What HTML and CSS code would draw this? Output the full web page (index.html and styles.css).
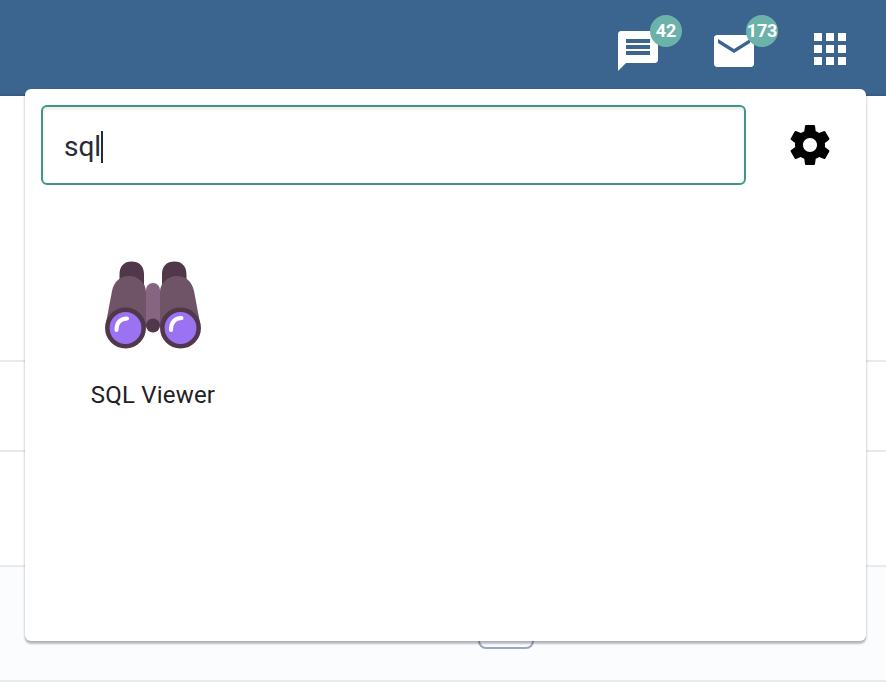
FILE: index.html
```html
<!DOCTYPE html>
<html lang="en">
<head>
<meta charset="utf-8">
<title>App launcher</title>
<link rel="stylesheet" href="styles.css">
</head>
<body>
<header class="topbar">
  <div class="action">
    <svg class="icon" viewBox="0 0 24 24"><path fill-rule="evenodd" d="M20.500 2h-17C2.670 2 2 2.670 2 3.500V22l4-4h14.500c.83 0 1.500-.67 1.500-1.500v-13C22 2.670 21.330 2 20.500 2zM6 6h12v2H6zM6 9h12v2H6zM6 12h12v2H6z"/></svg>
    <span class="badge">42</span>
  </div>
  <div class="action">
    <svg class="icon" viewBox="0 0 24 24"><path fill-rule="evenodd" d="M20.500 4h-17C2.670 4 2 4.670 2 5.500v13c0 .83.67 1.500 1.500 1.500h17c.83 0 1.500-.67 1.500-1.500v-13C22 4.670 21.330 4 20.500 4zM20 8l-8 5-8-5V6l8 5 8-5z"/></svg>
    <span class="badge badge-wide">173</span>
  </div>
  <div class="action action-apps">
    <svg class="icon" viewBox="0 0 24 24"><path d="M4 8h4V4H4zm6 12h4v-4h-4zm-6 0h4v-4H4zm0-6h4v-4H4zm6 0h4v-4h-4zm6-10v4h4V4zm-6 4h4V4h-4zm6 6h4v-4h-4zm0 6h4v-4h-4z"/></svg>
  </div>
</header>
<main class="rows">
  <div class="row row-first"></div>
  <div class="row row-second"></div>
  <div class="row row-third"></div>
  <div class="row row-tinted"><span class="control"></span></div>
</main>
<section class="launcher">
  <div class="search-line">
    <div class="search"><span>sql</span><i class="caret"></i></div>
    <svg class="icon settings" viewBox="0 0 24 24"><path d="M19.430 12.980c.04-.32.07-.64.07-.98s-.03-.66-.07-.98l2.110-1.650c.19-.15.24-.42.12-.64l-2-3.460c-.12-.22-.39-.3-.61-.22l-2.490 1c-.52-.4-1.080-.73-1.690-.98l-.38-2.650C14.460 2.180 14.250 2 14 2h-4c-.25 0-.46.18-.49.42l-.38 2.650c-.61.25-1.170.59-1.690.98l-2.490-1c-.23-.09-.49 0-.61.22l-2 3.460c-.13.22-.07.49.12.64l2.110 1.650c-.04.32-.07.65-.07.98s.03.66.07.98l-2.110 1.650c-.19.15-.24.42-.12.64l2 3.460c.12.22.39.3.61.22l2.490-1c.52.4 1.080.73 1.690.98l.38 2.650c.03.24.24.42.49.42h4c.25 0 .46-.18.49-.42l.38-2.650c.61-.25 1.170-.59 1.690-.98l2.490 1c.23.09.49 0 .61-.22l2-3.460c.12-.22.07-.49-.12-.64zM12 15.500c-1.930 0-3.500-1.570-3.500-3.500s1.570-3.500 3.500-3.500 3.500 1.570 3.500 3.500-1.570 3.500-3.500 3.500z"/></svg>
  </div>
  <div class="tile">
    <svg class="tile-icon" viewBox="0 0 96 88">
      <path fill="#50374a" d="M14.500 28V14C14.500 5 19 .5 26.500 .5S39 5 39 13V28zM57 28V13C57 5 62 .5 69.500 .5S81.500 5 81.500 14V28z"/>
      <rect x="41" y="22" width="14" height="48" rx="7" fill="#866580"/>
      <path fill="#6f5366" d="M1 62L7 30C9 20 16 15 24 15S41 21 41 31V66zM95 62L89 30C87 20 80 15 72 15S55 21 55 31V66z"/>
      <circle cx="48" cy="64.500" r="7" fill="#50374a"/>
      <g fill="#9b73f2" stroke="#50374a" stroke-width="4.500"><circle cx="20.500" cy="67" r="18.200"/><circle cx="75.500" cy="67" r="18.200"/></g>
      <g fill="none" stroke="#fff" stroke-width="4" stroke-linecap="round"><path d="M11.500 69Q11.500 58 22 57.500M66 69Q66 57.500 76.500 57"/></g>
    </svg>
    <span class="tile-label">SQL Viewer</span>
  </div>
</section>
</body>
</html>
```
FILE: styles.css
```css
* { box-sizing: border-box; }
body {
  margin: 0;
  width: 886px;
  height: 684px;
  overflow: hidden;
  position: relative;
  background: #fff;
  font-family: Roboto, sans-serif;
}
.topbar {
  height: 96px;
  padding: 27px 32px 0 0;
  display: flex;
  justify-content: flex-end;
  gap: 48px;
  background: #3b658f;
  box-shadow: inset 0 -2px 0 #375b81;
}
.action { position: relative; width: 48px; height: 48px; }
.action-apps { margin-top: -2px; }
.icon { display: block; width: 48px; height: 48px; fill: #fff; }
.badge {
  position: absolute;
  top: -12px;
  left: 36px;
  width: 32px;
  height: 32px;
  border-radius: 50%;
  background: #6bb2aa;
  color: #fff;
  font-size: 18px;
  font-weight: 700;
  line-height: 32px;
  display: flex;
  justify-content: center;
}
.badge-wide { letter-spacing: -.2px; }
.row { border-bottom: 2px solid #e8eaef; }
.row-first { height: 266px; }
.row-second { height: 90px; }
.row-third { height: 115px; }
.row-tinted {
  height: 115px;
  padding: 26px 0 0 478px;
  background: #fbfcfe;
}
.control {
  display: block;
  width: 56px;
  height: 56px;
  border: 2px solid #9da9b9;
  border-radius: 8px;
}
.launcher {
  position: absolute;
  top: 89px;
  left: 25px;
  width: 841px;
  height: 552px;
  padding: 16px;
  border-radius: 6px;
  background: #fff;
  box-shadow: 0 3px 2px rgba(30, 34, 50, .24), 0 1px 3px rgba(30, 34, 50, .2);
}
.search-line { display: flex; align-items: center; gap: 40px; }
.search {
  width: 705px;
  height: 80px;
  padding: 3px 21px 0;
  display: flex;
  align-items: center;
  border: 2px solid #419488;
  border-radius: 6px;
  box-shadow: inset 0 2px 4px rgba(0, 0, 0, .09);
  color: #252b37;
  font-size: 28px;
}
.caret { width: 2px; height: 32px; background: #252b37; }
.settings { fill: #000; }
.tile {
  width: 224px;
  padding-top: 76px;
  display: flex;
  flex-direction: column;
  align-items: center;
}
.tile-icon { width: 96px; height: 88px; }
.tile-label {
  margin-top: 31px;
  color: #202124;
  font-size: 24px;
  line-height: 30px;
  letter-spacing: .2px;
}
```
